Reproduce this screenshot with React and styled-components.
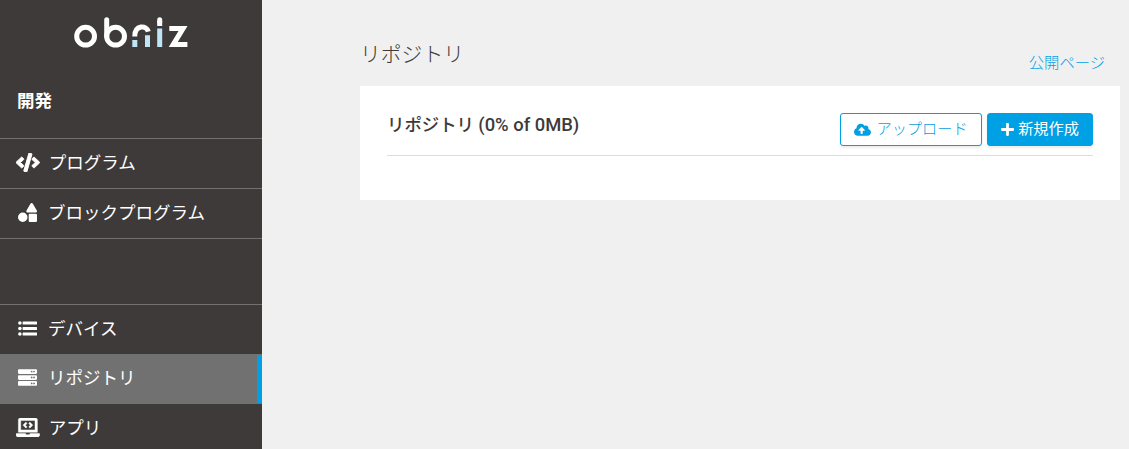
import React from "react";
import styled, { createGlobalStyle } from "styled-components";
import {
  FaCode,
  FaShapes,
  FaServer,
  FaLaptopCode,
  FaCloudUploadAlt,
  FaPlus,
} from "react-icons/fa";

const GlobalStyle = createGlobalStyle`
  * {
    box-sizing: border-box;
  }

  body {
    margin: 0;
    background: #f0f0f0;
    color: #3e3a39;
    font-family: Roboto, "Noto Sans CJK JP", sans-serif;
    overflow: hidden;
  }
`;

const Page = styled.div`
  display: flex;
  height: 100vh;
  overflow: hidden;
`;

const Sidebar = styled.nav`
  flex: 0 0 262px;
  background: #3e3a39;
  color: #fff;
  overflow: hidden;
`;

const LogoBox = styled.div`
  height: 66px;
  padding: 16px 0 0 73px;

  svg {
    display: block;
  }
`;

const Heading = styled.div`
  height: 72px;
  padding: 22px 0 0 17px;
  font-size: 17.5px;
  font-weight: 700;
  line-height: 26px;
`;

const Menu = styled.ul`
  margin: 0 0 ${(props) => props.$gap || 0}px;
  padding: 0;
  list-style: none;
  border-bottom: 1px solid #727171;
`;

const MenuItem = styled.li`
  display: flex;
  align-items: center;
  height: ${(props) => (props.$active ? 49 : 50)}px;
  padding: 0 0 ${(props) => (props.$active ? 3 : 2)}px 16px;
  border-top: 1px solid #727171;
  background: ${(props) => (props.$active ? "#727171" : "transparent")};
  box-shadow: ${(props) => (props.$active ? "inset -5px 0 #00a0e4" : "none")};
  font-size: 17.5px;
  line-height: 26px;
`;

const IconSlot = styled.span`
  display: flex;
  justify-content: center;
  flex: 0 0 23px;
  margin-right: 9px;

  svg {
    flex: none;
    width: ${(props) => (props.$wide ? 23.75 : 19)}px;
    height: 19px;
    stroke: currentColor;
    stroke-width: ${(props) => props.$weight || 0};
  }
`;

const Main = styled.main`
  flex: 1;
  padding: 38px 9px 0 98px;
`;

const TitleRow = styled.div`
  display: flex;
  justify-content: space-between;
  height: 48px;
`;

const Title = styled.h1`
  margin: 1px 0 0;
  font-size: 20.8px;
  font-weight: 300;
  line-height: 32px;
`;

const PublicLink = styled.a`
  margin: 13px 15px 0 0;
  color: #00a0e4;
  font-size: 15.3px;
  font-weight: 300;
  line-height: 24px;
`;

const Card = styled.section`
  height: 114px;
  padding: 27px 27px 0;
  background: #fff;
`;

const CardHeader = styled.div`
  display: flex;
  justify-content: space-between;
  height: 43px;
  border-bottom: 1px solid #dcdddd;
`;

const CardTitle = styled.h2`
  margin: 0;
  font-size: 17.4px;
  font-weight: 500;
  line-height: 24px;
`;

const Usage = styled.span`
  font-size: 18.4px;
`;

const Actions = styled.div`
  display: flex;
  gap: 5px;
`;

const Button = styled.button`
  display: flex;
  align-items: center;
  justify-content: center;
  gap: ${(props) => (props.$primary ? 4 : 5)}px;
  width: ${(props) => (props.$primary ? 106 : 142)}px;
  height: 33px;
  padding: 0 0 2px;
  border: 1px solid #00a0e4;
  border-radius: 3px;
  background: ${(props) => (props.$primary ? "#00a0e4" : "#fff")};
  color: ${(props) => (props.$primary ? "#fff" : "#00a0e4")};
  box-shadow: 0 2px 3px rgba(0, 0, 0, 0.08);
  font-family: inherit;
  font-size: 15.2px;
  font-weight: ${(props) => (props.$primary ? 400 : 300)};
  line-height: 24px;
  white-space: nowrap;

  svg {
    flex: none;
    width: ${(props) => (props.$primary ? 13 : 17)}px;
    height: ${(props) => (props.$primary ? 15 : 13.6)}px;
    margin-top: ${(props) => (props.$primary ? 1 : 2)}px;
  }
`;

const Logo = () => (
  <svg width="116" height="34" viewBox="0 0 116 34" fill="none">
    <g stroke="#fff" strokeWidth="5">
      <circle cx="12.6" cy="20.2" r="8.9" />
      <circle cx="42.6" cy="20.2" r="8.9" />
      <path d="M33.7 20.3V3.8" strokeLinecap="round" />
      <path d="M61.8 20.4C61.8 8.6 73.6 8.9 75.3 15.6" />
      <path d="M86.7 6V3.8" strokeLinecap="round" />
      <path d="M86.7 10V5" />
      <path d="M96.3 12.4h13.8L100.2 28.6h14.2" />
    </g>
    <path
      d="M61.8 24V31M74.5 19.2V31M86.7 12.6V31"
      stroke="#bfe6f7"
      strokeWidth="5"
    />
  </svg>
);

const ListIcon = () => (
  <svg viewBox="0 0 19 19" fill="currentColor">
    <circle cx="1.9" cy="4" r="1.8" />
    <circle cx="1.9" cy="9.5" r="1.8" />
    <circle cx="1.9" cy="15" r="1.8" />
    <rect x="4.6" y="2.5" width="14.4" height="3" rx="0.5" />
    <rect x="4.6" y="8" width="14.4" height="3" rx="0.5" />
    <rect x="4.6" y="13.5" width="14.4" height="3" rx="0.5" />
  </svg>
);

const developItems = [
  { label: "プログラム", icon: FaCode, wide: true, weight: 26 },
  { label: "ブロックプログラム", icon: FaShapes },
];

const resourceItems = [
  { label: "デバイス", icon: ListIcon },
  { label: "リポジトリ", icon: FaServer, active: true },
  { label: "アプリ", icon: FaLaptopCode, wide: true, weight: 12 },
];

const MenuList = ({ items, gap }) => (
  <Menu $gap={gap}>
    {items.map(({ label, icon: Icon, active, wide, weight }) => (
      <MenuItem key={label} $active={active}>
        <IconSlot $wide={wide} $weight={weight}>
          <Icon />
        </IconSlot>
        {label}
      </MenuItem>
    ))}
  </Menu>
);

const App = () => {
  return (
    <>
      <GlobalStyle />
      <Page>
        <Sidebar>
          <LogoBox>
            <Logo />
          </LogoBox>
          <Heading>開発</Heading>
          <MenuList items={developItems} gap={65} />
          <MenuList items={resourceItems} />
        </Sidebar>

        <Main>
          <TitleRow>
            <Title>リポジトリ</Title>
            <PublicLink>公開ページ</PublicLink>
          </TitleRow>
          <Card>
            <CardHeader>
              <CardTitle>
                リポジトリ <Usage>(0% of 0MB)</Usage>
              </CardTitle>
              <Actions>
                <Button>
                  <FaCloudUploadAlt />
                  アップロード
                </Button>
                <Button $primary>
                  <FaPlus />
                  新規作成
                </Button>
              </Actions>
            </CardHeader>
          </Card>
        </Main>
      </Page>
    </>
  );
};

export default App;
